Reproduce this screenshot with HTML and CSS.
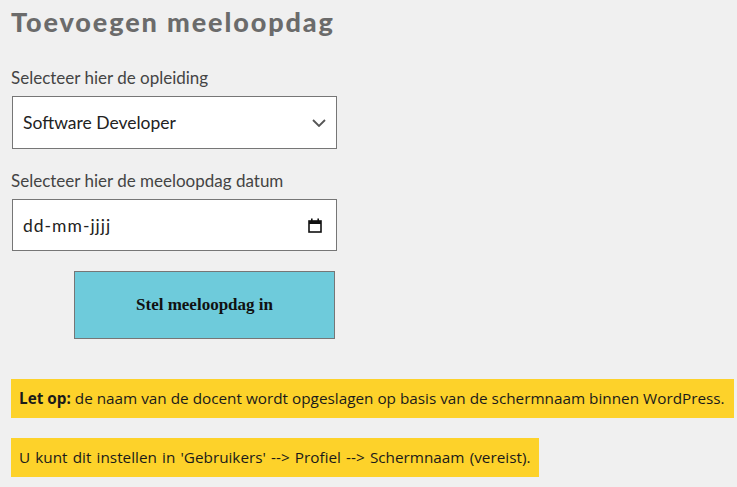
FILE: index.html
```html
<!DOCTYPE html>
<html lang="nl">
<head>
<meta charset="utf-8">
<title>Toevoegen meeloopdag</title>
<link rel="stylesheet" href="styles.css">
</head>
<body>
<div class="page">
  <h1 class="title">Toevoegen meeloopdag</h1>
  <form class="form">
    <div class="field">
      <label class="label">Selecteer hier de opleiding</label>
      <div class="control">
        <span class="value">Software Developer</span>
        <svg class="chevron" width="14" height="8" viewBox="0 0 14 8"><path d="M1 1 L7 7 L13 1" fill="none" stroke="#555" stroke-width="1.8"/></svg>
      </div>
    </div>
    <div class="field">
      <label class="label">Selecteer hier de meeloopdag datum</label>
      <div class="control control-date">
        <span class="value value-date">dd-mm-jjjj</span>
        <svg class="calendar" width="14" height="15" viewBox="0 0 14 15"><rect x="1" y="3" width="12" height="11" fill="none" stroke="#111" stroke-width="1.6"/><rect x="1" y="3" width="12" height="3" fill="#111"/><rect x="3" y="0.5" width="1.6" height="3" fill="#111"/><rect x="9.4" y="0.5" width="1.6" height="3" fill="#111"/></svg>
      </div>
    </div>
    <div class="actions">
      <button type="button" class="submit">Stel meeloopdag in</button>
    </div>
  </form>
  <p class="notice"><strong>Let op:</strong> de naam van de docent wordt opgeslagen op basis van de schermnaam binnen WordPress.</p>
  <p class="notice notice-wide">U kunt dit instellen in 'Gebruikers' --&gt; Profiel --&gt; Schermnaam (vereist).</p>
</div>
</body>
</html>
```
FILE: styles.css
```css
html, body {
  margin: 0;
  background: #f0f0f0;
}
.page {
  padding: 5px 0 0 11px;
}
.title {
  margin: 0;
  font-family: "Lato", sans-serif;
  font-weight: 900;
  font-size: 27px;
  letter-spacing: 1.9px;
  line-height: 34px;
  color: #6b6b6b;
}
.form {
  margin-top: 26px;
  width: 326px;
}
.field {
  display: flex;
  flex-direction: column;
}
.field + .field {
  margin-top: 19px;
}
.label {
  font-family: "Lato", sans-serif;
  font-size: 17px;
  line-height: 26px;
  color: #444;
  margin-bottom: 5px;
}
.control {
  margin-left: 1px;
  height: 53px;
  box-sizing: border-box;
  border: 1px solid #767676;
  background: #fff;
  display: flex;
  align-items: center;
  justify-content: space-between;
  padding: 0 10px 0 10px;
}
.control-date {
  height: 52px;
  padding-right: 14px;
}
.value {
  font-family: "Lato", sans-serif;
  font-size: 17.5px;
  color: #222;
}
.value-date {
  letter-spacing: 1px;
}
.actions {
  display: flex;
  justify-content: flex-end;
  margin-top: 20px;
  padding-right: 2px;
}
.submit {
  width: 261px;
  height: 68px;
  background: #6ecbdb;
  border: 1px solid #767676;
  font-family: "Liberation Serif", serif;
  font-weight: bold;
  font-size: 17px;
  color: #111;
  padding: 0;
}
.notice {
  display: table;
  margin: 0;
  background: #fdd22a;
  font-family: "Open Sans", sans-serif;
  font-size: 15.3px;
  line-height: 39px;
  padding: 0 9px 0 8px;
  color: #1a1a1a;
}
.notice-wide {
  word-spacing: 1.2px;
}
.form + .notice {
  margin-top: 40px;
}
.notice + .notice {
  margin-top: 20px;
}
```
